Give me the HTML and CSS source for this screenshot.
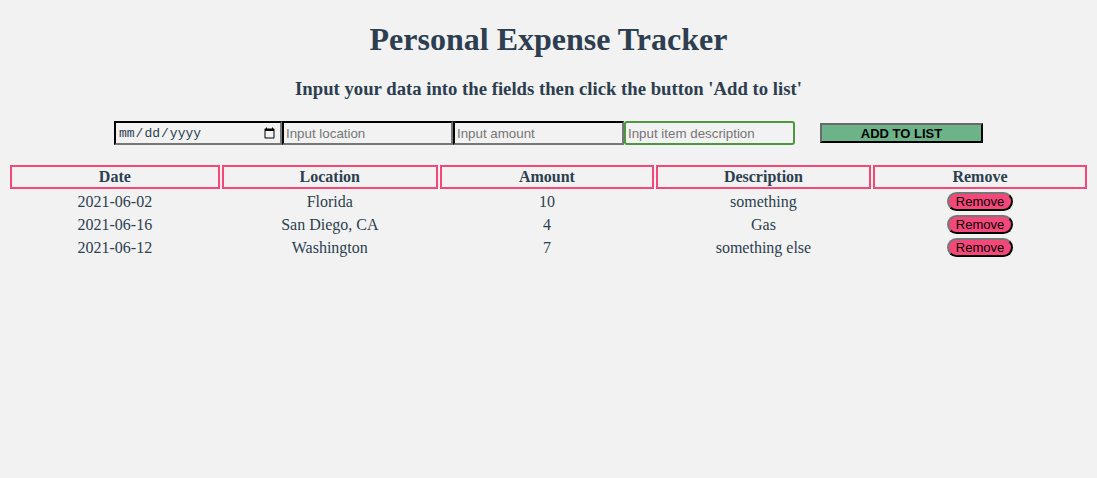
FILE: index.html
```html
<!DOCTYPE html>
<html>
<head>
<meta charset="utf-8">
<title>Personal Expense Tracker</title>
<link rel="stylesheet" href="styles.css">
</head>
<body>
<div class="app">
  <h1 class="title">Personal Expense Tracker</h1>
  <h3 class="subtitle">Input your data into the fields then click the button 'Add to list'</h3>
  <div class="form-row">
    <input class="field field-date" type="date">
    <input class="field" type="text" placeholder="Input location">
    <input class="field" type="text" placeholder="Input amount">
    <input class="field field-focus" type="text" placeholder="Input item description">
    <button class="add-btn" type="button">ADD TO LIST</button>
  </div>
  <table class="expenses">
    <thead>
      <tr><th class="col-date">Date</th><th class="col-loc">Location</th><th class="col-amt">Amount</th><th class="col-desc">Description</th><th class="col-rm">Remove</th></tr>
    </thead>
    <tbody>
      <tr><td>2021-06-02</td><td>Florida</td><td>10</td><td>something</td><td><button class="remove-btn" type="button">Remove</button></td></tr>
      <tr><td>2021-06-16</td><td>San Diego, CA</td><td>4</td><td>Gas</td><td><button class="remove-btn" type="button">Remove</button></td></tr>
      <tr><td>2021-06-12</td><td>Washington</td><td>7</td><td>something else</td><td><button class="remove-btn" type="button">Remove</button></td></tr>
    </tbody>
  </table>
</div>
</body>
</html>
```

FILE: styles.css
```css
html, body {
  background: #f2f2f2;
}
body {
  margin: 8px;
  font-family: "Liberation Serif", "Times New Roman", serif;
  color: #2c3e50;
}
.title {
  text-align: center;
  font-size: 32px;
  margin: 13px 0 0 0;
  line-height: 37px;
}
.subtitle {
  text-align: center;
  font-size: 18.72px;
  margin: 20px 0 0 0;
  line-height: 22px;
}
.form-row {
  display: flex;
  justify-content: center;
  align-items: center;
  margin-top: 20px;
  height: 26px;
}
.field {
  box-sizing: border-box;
  width: 171px;
  height: 24px;
  margin: 0;
  padding: 1px 2px;
  border: 2px inset #767676;
  border-top-color: #1f1f1f;
  border-left-color: #1f1f1f;
  border-right-color: #777;
  border-bottom-color: #777;
  background: #f2f2f2;
  font-family: "Liberation Sans", Arial, sans-serif;
  font-size: 13.33px;
  color: #2c3e50;
}
.field::placeholder {
  color: #757575;
}
.field-date {
  width: 168px;
  font-family: "Liberation Mono", "Courier New", monospace;
  font-size: 13px;
  color: #2c3e50;
}
.field-focus {
  border: 2px solid #4f9640;
  border-radius: 3px;
  width: 171px;
}
.add-btn {
  box-sizing: border-box;
  margin-left: 25px;
  width: 163px;
  height: 20px;
  padding: 0;
  background: #6db38a;
  border: 2px outset #555;
  border-top-color: #6a6a6a;
  border-left-color: #6a6a6a;
  border-right-color: #1a1a1a;
  border-bottom-color: #1a1a1a;
  font-family: "Liberation Sans", Arial, sans-serif;
  font-weight: bold;
  font-size: 13px;
  color: #000;
}
.expenses {
  width: 100%;
  margin-top: 17px;
  border-spacing: 2px;
}
.expenses th {
  border: 2px solid #f5487a;
  font-size: 16px;
  line-height: 18px;
  padding: 1px;
}
.col-date { width: 19.6%; }
.col-loc { width: 20.2%; }
.col-amt { width: 20%; }
.col-desc { width: 20.1%; }
.col-rm { width: 20%; }
.expenses td {
  text-align: center;
  font-size: 16px;
  line-height: 19px;
  padding: 1px;
}
.remove-btn {
  box-sizing: border-box;
  width: 66px;
  height: 19px;
  padding: 0;
  margin: 0;
  vertical-align: top;
  background: #f5487a;
  border: 2px outset #555;
  border-top-color: #777;
  border-left-color: #777;
  border-right-color: #1a1a1a;
  border-bottom-color: #1a1a1a;
  border-radius: 10px;
  font-family: "Liberation Sans", Arial, sans-serif;
  font-size: 13px;
  line-height: 15px;
  color: #000;
}
```
